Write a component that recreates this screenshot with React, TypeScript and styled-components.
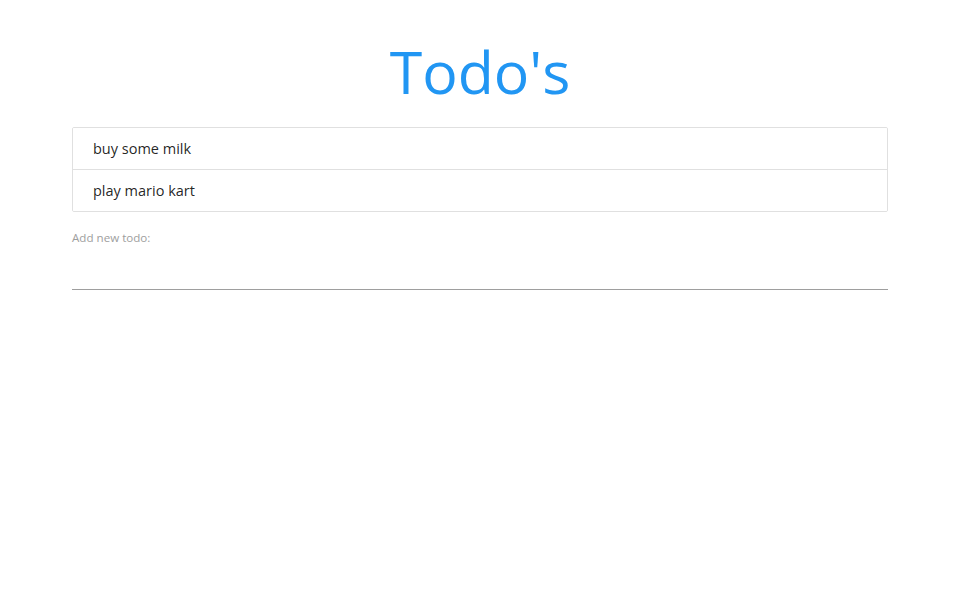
import React, { useState } from "react";
import styled, { createGlobalStyle } from "styled-components";

const GlobalStyle = createGlobalStyle`
  html {
    font-size: 14.5px;
  }
  body {
    margin: 0;
    font-family: "Open Sans", "Noto Sans", sans-serif;
    color: rgba(0, 0, 0, 0.87);
    background: #ffffff;
  }
  * {
    box-sizing: border-box;
  }
`;

export default function App() {
  const [todos] = useState(["buy some milk", "play mario kart"]);
  const [text, setText] = useState("");

  return (
    <>
      <GlobalStyle />
      <Container>
        <Title>Todo's</Title>
        <Collection>
          {todos.map((todo) => (
            <CollectionItem key={todo}>{todo}</CollectionItem>
          ))}
        </Collection>
        <AddForm onSubmit={(e) => e.preventDefault()}>
          <Label htmlFor="new-todo">Add new todo:</Label>
          <Input
            id="new-todo"
            type="text"
            value={text}
            onChange={(e) => setText(e.target.value)}
          />
        </AddForm>
      </Container>
    </>
  );
}

const Container = styled.div`
  width: 85%;
  margin: 0 auto;
  display: flex;
  flex-direction: column;
`;

const Title = styled.h1`
  margin: 39px 0 23px;
  font-size: 59px;
  line-height: 65px;
  font-weight: 400;
  text-align: center;
  color: #2196f3;
`;

const Collection = styled.ul`
  margin: 0 0 15px;
  padding: 0;
  list-style: none;
  border: 1px solid #e0e0e0;
  border-radius: 2px;
  overflow: hidden;
`;

const CollectionItem = styled.li`
  padding: 10px 20px;
  line-height: 21px;
  font-size: 14.5px;
  border-bottom: 1px solid #e0e0e0;
  background: #ffffff;

  &:last-child {
    border-bottom: none;
  }
`;

const AddForm = styled.form`
  display: flex;
  flex-direction: column;
`;

const Label = styled.label`
  padding-top: 3px;
  font-size: 11.6px;
  line-height: 16px;
  color: #9e9e9e;
`;

const Input = styled.input`
  height: 44px;
  border: none;
  border-bottom: 1px solid #9e9e9e;
  outline: none;
  background: transparent;
  font-family: inherit;
  font-size: 14.5px;
  padding: 0;
`;
